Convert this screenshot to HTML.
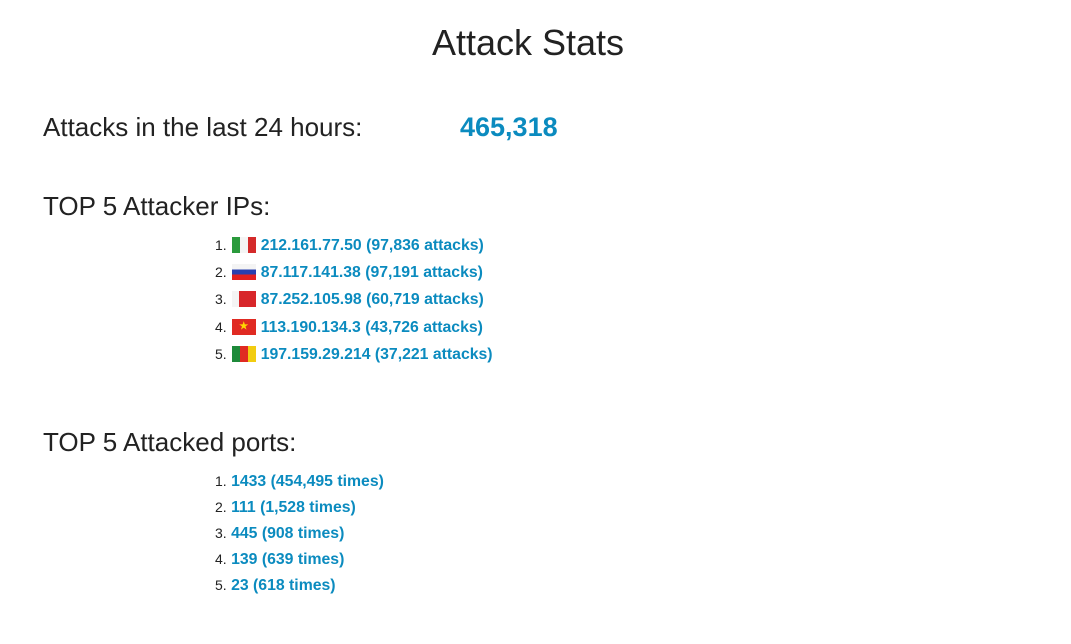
<!DOCTYPE html>
<html><head><meta charset="utf-8"><style>
body{margin:0;width:1071px;height:644px;background:#fff;font-family:"Liberation Sans",sans-serif;color:#222;position:relative;overflow:hidden}
.a{position:absolute;white-space:nowrap}
h1{position:absolute;margin:0;font-weight:300;font-size:36px;top:22px;left:0;width:1056px;text-align:center}
.h{font-size:26px;font-weight:300}
.n{color:#0b8bbf;font-weight:bold;font-size:27px}
.li{position:absolute;font-size:15.8px;font-weight:bold;white-space:nowrap;left:215px;line-height:18px}
.li span.num{font-weight:normal;color:#222;font-size:14px}
.li b{color:#0b8bbf}
.f{display:inline-block;width:24px;height:16px;vertical-align:top;margin:1px 5px 0 5px;overflow:hidden}
</style></head><body>
<h1>Attack Stats</h1>
<div class="a h" style="left:43px;top:112px">Attacks in the last 24 hours:</div>
<div class="a n" style="left:460px;top:112px">465,318</div>
<div class="a h" style="left:43px;top:191px">TOP 5 Attacker IPs:</div>
<div class="li" style="top:236px"><span class="num">1.</span><span class="f" style="background:linear-gradient(90deg,#2a9a3c 33%,#f4f4f4 33% 66%,#d42a2a 66%)"></span><b>212.161.77.50 (97,836 attacks)</b></div>
<div class="li" style="top:263px"><span class="num">2.</span><span class="f" style="background:linear-gradient(#f4f4f4 33%,#2a3fb0 33% 66%,#e42020 66%)"></span><b>87.117.141.38 (97,191 attacks)</b></div>
<div class="li" style="top:290px"><span class="num">3.</span><span class="f" style="background:linear-gradient(90deg,#f4f4f4 30%,#d8262a 30%)"></span><b>87.252.105.98 (60,719 attacks)</b></div>
<div class="li" style="top:318px"><span class="num">4.</span><span class="f" style="background:#e02a22;color:#ffd800;font-size:10px;text-align:center;line-height:16px">★</span><b>113.190.134.3 (43,726 attacks)</b></div>
<div class="li" style="top:345px"><span class="num">5.</span><span class="f" style="background:linear-gradient(90deg,#1e8a3a 33%,#e02a22 33% 66%,#f2cc10 66%)"></span><b>197.159.29.214 (37,221 attacks)</b></div>
<div class="a h" style="left:43px;top:427px">TOP 5 Attacked ports:</div>
<div class="li" style="top:472px"><span class="num">1.</span> <b>1433 (454,495 times)</b></div>
<div class="li" style="top:498px"><span class="num">2.</span> <b>111 (1,528 times)</b></div>
<div class="li" style="top:524px"><span class="num">3.</span> <b>445 (908 times)</b></div>
<div class="li" style="top:550px"><span class="num">4.</span> <b>139 (639 times)</b></div>
<div class="li" style="top:576px"><span class="num">5.</span> <b>23 (618 times)</b></div>
</body></html>
